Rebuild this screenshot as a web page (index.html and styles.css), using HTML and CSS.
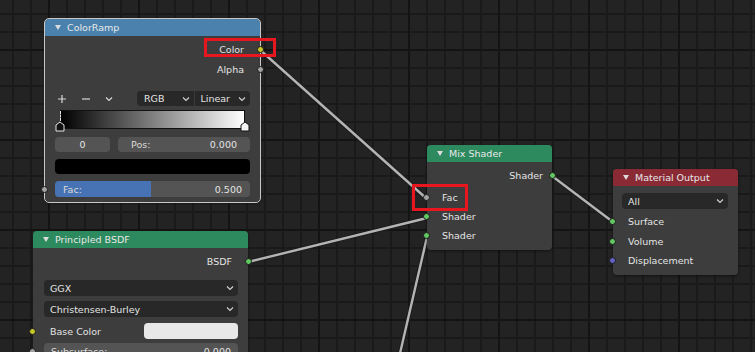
FILE: index.html
```html
<!DOCTYPE html>
<html lang="en">
<head>
  <meta charset="UTF-8">
  <title>Shader Editor</title>
  <link rel="stylesheet" href="styles.css">
</head>
<body>
<div class="editor">

  <svg class="links" width="755" height="352" viewBox="0 0 755 352">
    <g class="link-back">
      <line x1="259" y1="49" x2="427" y2="199"/>
      <line x1="552" y1="176" x2="613" y2="222"/>
      <line x1="248" y1="262" x2="427" y2="218"/>
      <line x1="398" y1="362" x2="427" y2="237"/>
    </g>
    <g class="link-front">
      <line x1="259" y1="49" x2="427" y2="199"/>
      <line x1="552" y1="176" x2="613" y2="222"/>
      <line x1="248" y1="262" x2="427" y2="218"/>
      <line x1="398" y1="362" x2="427" y2="237"/>
    </g>
  </svg>

  <!-- ColorRamp -->
  <div class="node node-ramp selected">
    <div class="node-head head-converter">
      <span class="tri"></span>ColorRamp
    </div>
    <div class="node-body">
      <div class="row out first">Color<span class="socket s-color"></span></div>
      <div class="row out">Alpha<span class="socket s-value"></span></div>

      <div class="ramp-tools">
        <span class="tool">
          <svg width="10" height="10" viewBox="0 0 10 10"><path d="M5 1V9M1 5H9"/></svg>
        </span>
        <span class="tool">
          <svg width="10" height="10" viewBox="0 0 10 10"><path d="M1 5H9"/></svg>
        </span>
        <span class="tool">
          <svg width="8" height="6" viewBox="0 0 8 6"><path d="M1 1.5L4 4.5L7 1.5"/></svg>
        </span>
        <div class="menu-pair">
          <div class="menu">RGB<svg class="chev" width="8" height="6" viewBox="0 0 8 6"><path d="M1 1.5L4 4.5L7 1.5"/></svg></div>
          <div class="menu">Linear<svg class="chev" width="8" height="6" viewBox="0 0 8 6"><path d="M1 1.5L4 4.5L7 1.5"/></svg></div>
        </div>
      </div>

      <div class="ramp">
        <div class="ramp-bar"></div>
        <span class="stop-line"></span>
        <svg class="stop stop-left" width="10" height="11" viewBox="0 0 10 11"><path d="M1 4L5 1L9 4V10H1Z"/></svg>
        <svg class="stop stop-right" width="10" height="11" viewBox="0 0 10 11"><path d="M1 4L5 1L9 4V10H1Z"/></svg>
      </div>

      <div class="ramp-fields">
        <div class="field field-index">0</div>
        <div class="field field-pos"><span class="label">Pos:</span><span>0.000</span></div>
      </div>
      <div class="swatch-black"></div>
      <div class="slider">
        <div class="slider-fill" style="width: 49%"></div>
        <span class="label">Fac:</span><span>0.500</span>
        <span class="socket s-value in"></span>
      </div>
    </div>
  </div>

  <!-- Principled BSDF -->
  <div class="node node-bsdf">
    <div class="node-head head-shader">
      <span class="tri"></span>Principled BSDF
    </div>
    <div class="node-body">
      <div class="row out first">BSDF<span class="socket s-shader"></span></div>
      <div class="dropdown dd-first">GGX<svg class="chev" width="8" height="6" viewBox="0 0 8 6"><path d="M1 1.5L4 4.5L7 1.5"/></svg></div>
      <div class="dropdown">Christensen-Burley<svg class="chev" width="8" height="6" viewBox="0 0 8 6"><path d="M1 1.5L4 4.5L7 1.5"/></svg></div>
      <div class="prop-row">
        <span class="socket s-color in"></span>
        <span class="prop-label">Base Color</span>
        <span class="color-field"></span>
      </div>
      <div class="field field-wide">
        <span class="socket s-value in"></span>
        <span class="label">Subsurface:</span><span>0.000</span>
      </div>
    </div>
  </div>

  <!-- Mix Shader -->
  <div class="node node-mix">
    <div class="node-head head-shader">
      <span class="tri"></span>Mix Shader
    </div>
    <div class="node-body">
      <div class="row out first">Shader<span class="socket s-shader"></span></div>
      <div class="row in-row first-in"><span class="socket s-value in"></span>Fac</div>
      <div class="row in-row"><span class="socket s-shader in"></span>Shader</div>
      <div class="row in-row"><span class="socket s-shader in"></span>Shader</div>
    </div>
  </div>

  <!-- Material Output -->
  <div class="node node-output">
    <div class="node-head head-output">
      <span class="tri"></span>Material Output
    </div>
    <div class="node-body">
      <div class="dropdown dd-all">All<svg class="chev" width="8" height="6" viewBox="0 0 8 6"><path d="M1 1.5L4 4.5L7 1.5"/></svg></div>
      <div class="row in-row out-first"><span class="socket s-shader in"></span>Surface</div>
      <div class="row in-row"><span class="socket s-shader in"></span>Volume</div>
      <div class="row in-row"><span class="socket s-vector in"></span>Displacement</div>
    </div>
  </div>

  <!-- highlight boxes -->
  <div class="mark mark-color"></div>
  <div class="mark mark-fac"></div>

</div>
</body>
</html>
```

FILE: styles.css
```css
* {
  box-sizing: border-box;
}

body {
  margin: 0;
  background: #232323;
}

.editor {
  position: relative;
  width: 755px;
  height: 352px;
  overflow: hidden;
  font-family: "DejaVu Sans", sans-serif;
  font-size: 9.5px;
  color: #e4e4e4;
  background-color: #232323;
  background-image:
    linear-gradient(to right, #141414 2px, transparent 2px),
    linear-gradient(to bottom, #141414 2px, transparent 2px),
    linear-gradient(to right, #1a1a1a 2px, transparent 2px),
    linear-gradient(to bottom, #1a1a1a 2px, transparent 2px);
  background-size: 90px 90px, 90px 90px, 18px 18px, 18px 18px;
  background-position: 48px 49px, 48px 49px, 12px 13px, 12px 13px;
}

/* links */
.links {
  position: absolute;
  left: 0;
  top: 0;
}

.link-back line {
  stroke: #1c1c1c;
  stroke-width: 4.5;
}

.link-front line {
  stroke: #b4b4b4;
  stroke-width: 2.4;
}

/* nodes */
.node {
  position: absolute;
  background: #3d3d3d;
  border-radius: 4px;
  box-shadow: 0 1px 3px rgba(0, 0, 0, 0.5);
}

.node.selected {
  outline: 1px solid #c8c8c8;
}

.node-ramp {
  left: 45px;
  top: 19px;
  width: 215px;
  height: 183px;
}

.node-bsdf {
  left: 33px;
  top: 231px;
  width: 215px;
  height: 140px;
}

.node-mix {
  left: 427px;
  top: 145px;
  width: 125px;
  height: 105px;
}

.node-output {
  left: 613px;
  top: 169px;
  width: 125px;
  height: 106px;
}

.node-head {
  height: 17px;
  display: flex;
  align-items: center;
  padding-left: 10px;
  border-radius: 4px 4px 0 0;
  color: #e8e8e8;
}

.head-converter {
  background: #4a81ad;
}

.head-shader {
  background: #2d8a5f;
}

.head-output {
  background: #8a2a35;
}

.tri {
  width: 0;
  height: 0;
  border-left: 3px solid transparent;
  border-right: 3px solid transparent;
  border-top: 5px solid #dcdcdc;
  margin-right: 6px;
}

.node-body {
  position: relative;
  display: flex;
  flex-direction: column;
}

.row {
  position: relative;
  height: 20px;
  display: flex;
  align-items: center;
}

.row.out {
  justify-content: flex-end;
  padding-right: 16px;
}

.node-mix .row.out {
  padding-right: 9px;
}

.row.first {
  margin-top: 3px;
}

.row.in-row {
  height: 19px;
  padding-left: 15px;
}

.row.first-in {
  margin-top: 3px;
}

.node-output .row.in-row {
  height: 19.5px;
}

.out-first {
  margin-top: 3px;
}

/* sockets */
.socket {
  position: absolute;
  width: 7px;
  height: 7px;
  border-radius: 50%;
  border: 1px solid #1a1a1a;
  top: 50%;
  margin-top: -3.5px;
  right: -4px;
}

.socket.in {
  right: auto;
  left: -4px;
}

.s-color {
  background: #c7c729;
}

.s-value {
  background: #a1a1a1;
}

.s-shader {
  background: #63c763;
}

.s-vector {
  background: #6363c7;
}

/* ColorRamp widgets */
.ramp-tools {
  display: flex;
  align-items: center;
  height: 15px;
  margin-top: 12px;
  padding-left: 12px;
}

.tool {
  width: 24px;
  display: flex;
  align-items: center;
}

.tool svg path {
  stroke: #d8d8d8;
  stroke-width: 1.2;
  fill: none;
}

.menu-pair {
  display: flex;
  margin-left: 8px;
  width: 113px;
  height: 15px;
  background: #282828;
  border-radius: 4px;
}

.menu {
  flex: 1;
  display: flex;
  align-items: center;
  justify-content: space-between;
  padding: 0 4px 0 7px;
}

.menu + .menu {
  border-left: 1px solid #3a3a3a;
  padding-left: 6px;
}

.chev path {
  stroke: #d0d0d0;
  stroke-width: 1.2;
  fill: none;
}

.ramp {
  position: relative;
  height: 22px;
  margin: 4px 15px 0 15px;
}

.ramp-bar {
  height: 19px;
  border: 1px solid #111;
  background: linear-gradient(to right, #000, #fff);
}

.stop-line {
  position: absolute;
  left: 0;
  top: 1px;
  height: 10px;
  border-left: 1px dashed #e0e0e0;
}

.stop {
  position: absolute;
  top: 11px;
}

.stop-left {
  left: -5px;
}

.stop-left path {
  fill: #111;
  stroke: #e8e8e8;
  stroke-width: 1;
}

.stop-right {
  right: -5px;
}

.stop-right path {
  fill: #f4f4f4;
  stroke: #111;
  stroke-width: 1;
}

.ramp-fields {
  display: flex;
  gap: 8px;
  margin: 5px 10px 0 10px;
  height: 15px;
}

.field {
  display: flex;
  align-items: center;
  justify-content: space-between;
  background: #545454;
  border-radius: 4px;
  padding: 0 7px;
}

.field-index {
  width: 55px;
  justify-content: center;
}

.field-pos {
  flex: 1;
  padding-left: 13px;
  padding-right: 13px;
}

.label {
  color: #dadada;
}

.swatch-black {
  height: 15px;
  margin: 7px 10px 0 10px;
  background: #000;
  border-radius: 4px;
}

.slider {
  position: relative;
  display: flex;
  align-items: center;
  justify-content: space-between;
  height: 16px;
  margin: 7px 10px 0 10px;
  padding: 0 8px;
  background: #545454;
  border-radius: 4px;
}

.slider-fill {
  position: absolute;
  left: 0;
  top: 0;
  bottom: 0;
  background: #4772b3;
  border-radius: 4px 0 0 4px;
}

.slider span {
  position: relative;
}

.slider .socket.in {
  position: absolute;
  left: -14px;
}

/* Principled BSDF widgets */
.dropdown {
  display: flex;
  align-items: center;
  justify-content: space-between;
  height: 16px;
  margin: 5px 10px 0 11px;
  padding: 0 4px 0 6px;
  background: #282828;
  border-radius: 4px;
}

.dd-first {
  margin-top: 9px;
}

.dd-all {
  margin: 7px 10px 0 9px;
}

.prop-row {
  position: relative;
  display: flex;
  align-items: center;
  height: 16px;
  margin-top: 6px;
  padding-left: 17px;
}

.prop-label {
  width: 94px;
}

.color-field {
  width: 94px;
  height: 16px;
  background: #e8e8e8;
  border-radius: 4px;
}

.field-wide {
  position: relative;
  height: 16px;
  margin: 4px 10px 0 11px;
}

.field-wide .socket.in {
  left: -15px;
}

/* highlight boxes */
.mark {
  position: absolute;
  border: 3px solid #e8161e;
}

.mark-color {
  left: 204px;
  top: 38px;
  width: 72px;
  height: 19px;
}

.mark-fac {
  left: 412px;
  top: 184px;
  width: 56px;
  height: 27px;
}
```
